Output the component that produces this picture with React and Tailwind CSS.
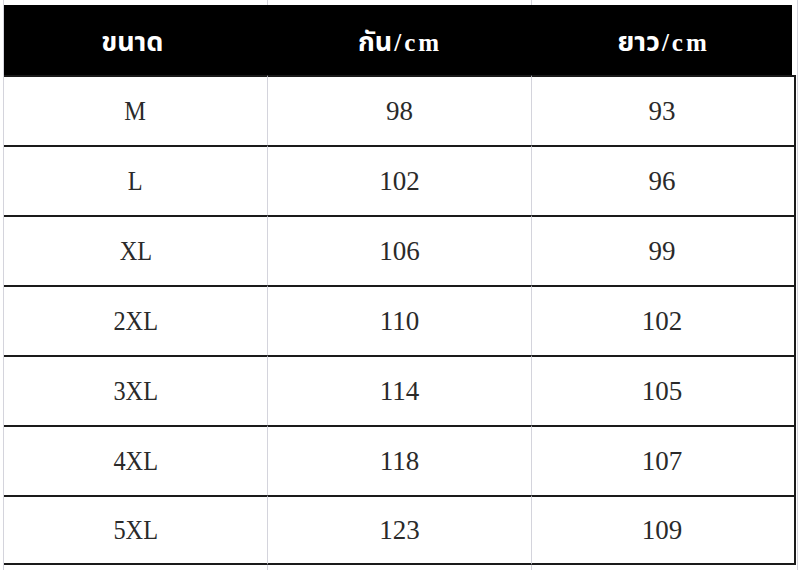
const rows = [
  ["M", "98", "93"],
  ["L", "102", "96"],
  ["XL", "106", "99"],
  ["2XL", "110", "102"],
  ["3XL", "114", "105"],
  ["4XL", "118", "107"],
  ["5XL", "123", "109"],
];

const serif = "font-['Liberation_Serif','Noto_Sans_Thai','Loma',serif]";

const GridStrip = ({ height }) => (
  <div className={`grid grid-cols-[4px_264px_264px_264px_1fr] ${height}`}>
    <div className="border-r border-[#d4d4dc]" />
    <div className="border-r border-[#d4d4dc]" />
    <div className="border-r border-[#d4d4dc]" />
    <div />
    <div className="ml-[1px] border-l border-[#d4d4dc]" />
  </div>
);

const Unit = () => <span className="text-[25px] tracking-[3px] pl-[2px]">/cm</span>;

const App = () => {
  return (
    <div className={`w-[800px] h-[570px] bg-white overflow-hidden ${serif}`}>
      <GridStrip height="h-[5px]" />

      {/* header */}
      <div className="grid grid-cols-[4px_264px_264px_264px_1fr] h-[70px]">
        <div className="border-r border-[#d4d4dc]" />
        <div className="col-span-3 mr-[4px] bg-black grid grid-cols-3 text-white font-bold text-[27px]">
          <div className="flex items-center justify-center pt-[5px] pr-[6px]">ขนาด</div>
          <div className="flex items-baseline justify-center items-center pt-[5px] pl-[4px]">
            <span>กัน</span>
            <Unit />
          </div>
          <div className="flex items-baseline justify-center items-center pt-[5px] pl-[6px]">
            <span>ยาว</span>
            <Unit />
          </div>
        </div>
        <div className="ml-[1px] border-l border-[#d4d4dc]" />
      </div>

      {/* body */}
      {rows.map((r, i) => (
        <div
          key={r[0]}
          className="grid grid-cols-[4px_264px_264px_264px_1fr] h-[70px]"
        >
          <div className="border-r border-[#d4d4dc]" />
          <div
            className={`border-t-2 border-r border-t-[#1a1a1a] border-r-[#d4d4dc] flex items-center justify-center text-[27px] text-[#2a2a2a] ${
              i === rows.length - 1 ? "border-b-2 border-b-[#1a1a1a]" : ""
            }`}
          >
            <span className="scale-x-90 inline-block">{r[0]}</span>
          </div>
          <div
            className={`border-t-2 border-r border-t-[#1a1a1a] border-r-[#d4d4dc] flex items-center justify-center text-[27px] text-[#2a2a2a] ${
              i === rows.length - 1 ? "border-b-2 border-b-[#1a1a1a]" : ""
            }`}
          >
            {r[1]}
          </div>
          <div
            className={`border-t-2 border-r-2 border-[#1a1a1a] flex items-center justify-center text-[27px] text-[#2a2a2a] pr-[2px] ${
              i === rows.length - 1 ? "border-b-2" : ""
            }`}
          >
            {r[2]}
          </div>
          <div className="ml-[1px] border-l border-[#d4d4dc]" />
        </div>
      ))}

      <GridStrip height="h-[10px]" />
    </div>
  );
};

export default App;
